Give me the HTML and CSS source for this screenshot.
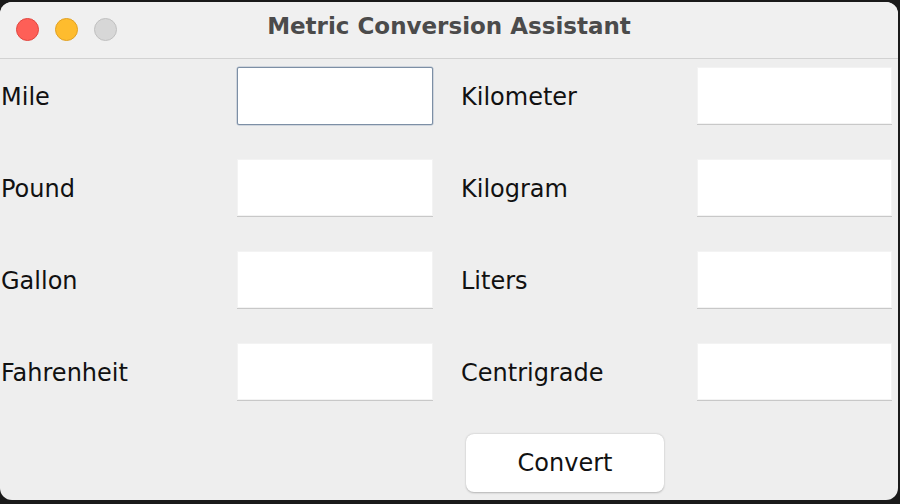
FILE: index.html
```html
<!DOCTYPE html>
<html>
<head>
<meta charset="utf-8">
<link rel="stylesheet" href="styles.css">
</head>
<body>
<div class="window">
  <div class="titlebar">
    <div class="lights">
      <span class="light red"></span>
      <span class="light yellow"></span>
      <span class="light gray"></span>
    </div>
    <div class="title">Metric Conversion Assistant</div>
  </div>
  <div class="content">
    <div class="grid">
      <div class="label">Mile</div>
      <div class="field focused"></div>
      <div class="label right">Kilometer</div>
      <div class="field"></div>

      <div class="label">Pound</div>
      <div class="field"></div>
      <div class="label right">Kilogram</div>
      <div class="field"></div>

      <div class="label">Gallon</div>
      <div class="field"></div>
      <div class="label right">Liters</div>
      <div class="field"></div>

      <div class="label">Fahrenheit</div>
      <div class="field"></div>
      <div class="label right">Centrigrade</div>
      <div class="field"></div>
    </div>
    <div class="actions">
      <button class="btn">Convert</button>
    </div>
  </div>
</div>
</body>
</html>
```

FILE: styles.css
```css
html, body {
  margin: 0;
  padding: 0;
  background: #1a1a1a;
  width: 900px;
  height: 504px;
  overflow: hidden;
}
.window {
  margin: 2px 2px 0 0;
  width: 898px;
  height: 498px;
  background: #eeeeee;
  border-radius: 12px;
  overflow: hidden;
  font-family: "DejaVu Sans", sans-serif;
  color: #111;
}
.titlebar {
  position: relative;
  height: 56px;
  background: #f0f0f0;
  border-bottom: 1px solid #d2d2d2;
  display: flex;
  align-items: flex-start;
  justify-content: center;
}
.lights {
  position: absolute;
  left: 16px;
  top: 16px;
  display: flex;
  gap: 16px;
}
.light {
  width: 23px;
  height: 23px;
  border-radius: 50%;
  box-sizing: border-box;
}
.red { background: #fe5f57; border: 1px solid #e2463f; }
.yellow { background: #febc2e; border: 1px solid #e1a123; }
.gray { background: #d7d7d7; border: 1px solid #c0c0c0; }
.title {
  font-family: "DejaVu Sans", sans-serif;
  font-weight: 700;
  font-size: 23px;
  line-height: 28px;
  padding-top: 10px;
  color: #4b4b4b;
}
.content {
  padding-top: 8px;
}
.grid {
  display: grid;
  grid-template-columns: 237px 196px 264px 195px;
  grid-auto-rows: 58px;
  row-gap: 34px;
  column-gap: 0;
}
.label {
  font-size: 24px;
  display: flex;
  align-items: center;
  padding-left: 1px;
  padding-top: 2px;
}
.label.right {
  padding-left: 28px;
}
.field {
  background: #ffffff;
  box-sizing: border-box;
  border: 1px solid #f3f3f3;
  box-shadow: 0 1px 0 #c8c8c8;
  height: 57px;
}
.field.focused {
  border: 1px solid #7d8fa5;
  border-radius: 2px;
  box-shadow: 0 0 0 0.5px #b0bccb;
  height: 58px;
}
.actions {
  padding-left: 466px;
  padding-top: 33px;
}
.btn {
  width: 198px;
  height: 58px;
  background: #ffffff;
  border: none;
  border-radius: 8px;
  box-shadow: 0 0.5px 2px rgba(0,0,0,0.25);
  font-family: "DejaVu Sans", sans-serif;
  font-size: 24px;
  color: #111;
  padding: 0;
}
```
